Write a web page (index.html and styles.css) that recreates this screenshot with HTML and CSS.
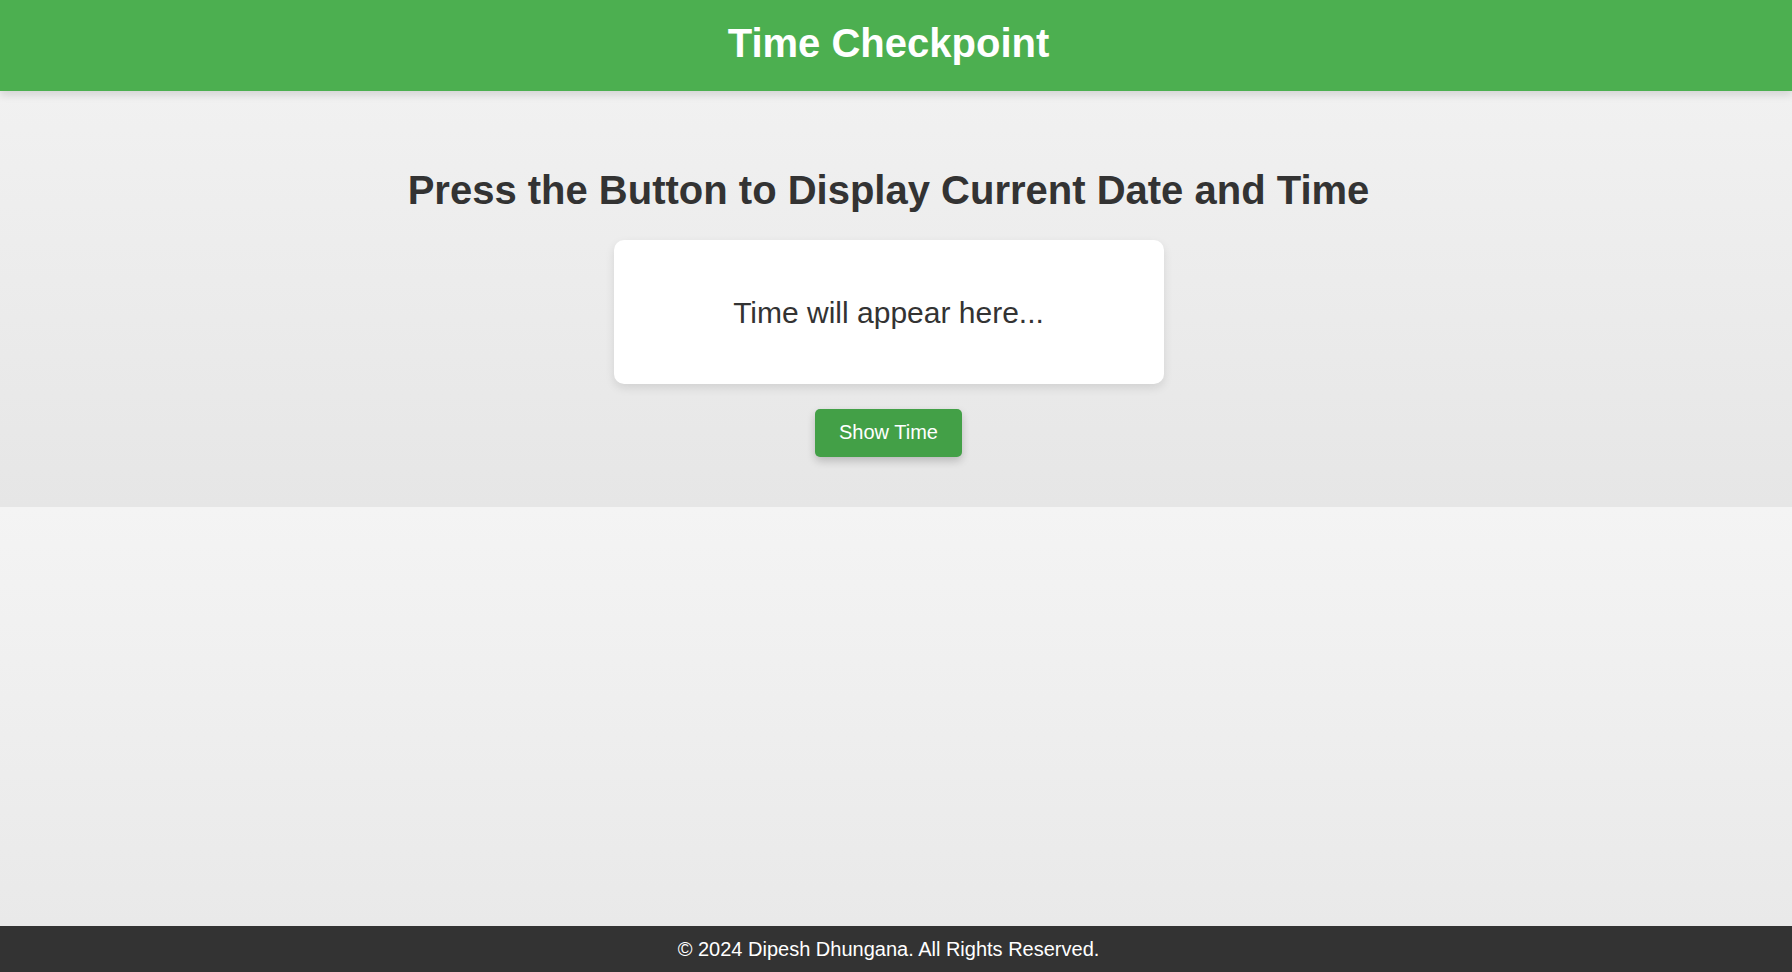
FILE: index.html
```html
<!DOCTYPE html>
<html lang="en">
<head>
<meta charset="UTF-8">
<title>Time Checkpoint</title>
<link rel="stylesheet" href="styles.css">
</head>
<body>
<header class="site-header">
  <h1 class="site-title">Time Checkpoint</h1>
</header>
<main class="page">
  <section class="clock-section">
    <h2 class="clock-heading">Press the Button to Display Current Date and Time</h2>
    <div class="time-card">
      <p class="time-text">Time will appear here...</p>
    </div>
    <button class="show-btn" type="button">Show Time</button>
  </section>
</main>
<footer class="site-footer">
  <p class="footer-text">&copy; 2024 Dipesh Dhungana. All Rights Reserved.</p>
</footer>
</body>
</html>
```

FILE: styles.css
```css
* {
  box-sizing: border-box;
}

html, body {
  margin: 0;
  padding: 0;
}

body {
  min-height: 100vh;
  display: flex;
  flex-direction: column;
  font-family: "Liberation Sans", Arial, sans-serif;
  color: #333;
  background: #eeeeee;
}

.site-header {
  position: relative;
  z-index: 2;
  background: #4caf50;
  color: #fff;
  text-align: center;
  padding: 20px 35px 25px 20px;
  box-shadow: 0 4px 8px rgba(0, 0, 0, 0.12);
}

.site-title {
  margin: 0;
  font-size: 40px;
  line-height: 46px;
  font-weight: bold;
}

.page {
  flex: 1;
  display: flex;
  flex-direction: column;
}

.page::after {
  content: "";
  flex: 1;
  background: linear-gradient(to bottom, #f4f4f4, #e9e9e9);
}

.clock-section {
  display: flex;
  flex-direction: column;
  align-items: center;
  padding: 50px 35px 50px 20px;
  background: linear-gradient(to bottom, #f1f1f1, #e6e6e6);
}

.clock-heading {
  margin: 26px 0 27px;
  font-size: 40px;
  line-height: 46px;
  font-weight: bold;
  color: #333;
  text-align: center;
}

.time-card {
  width: 550px;
  height: 144px;
  background: #fff;
  border-radius: 10px;
  box-shadow: 0 4px 10px rgba(0, 0, 0, 0.1);
  display: flex;
  align-items: center;
  justify-content: center;
  margin-bottom: 25px;
}

.time-text {
  margin: 0;
  font-size: 30px;
  line-height: 35px;
  color: #333;
}

.show-btn {
  font-family: "Liberation Sans", Arial, sans-serif;
  font-size: 20px;
  line-height: 23px;
  color: #fff;
  background: #43a047;
  border: none;
  border-radius: 5px;
  padding: 12px 24px 13px;
  box-shadow: 0 4px 8px rgba(0, 0, 0, 0.2);
  cursor: pointer;
}

.site-footer {
  background: #333;
  color: #fff;
  text-align: center;
  padding: 12px 35px 11px 20px;
}

.footer-text {
  margin: 0;
  font-size: 20px;
  line-height: 23px;
}
```
